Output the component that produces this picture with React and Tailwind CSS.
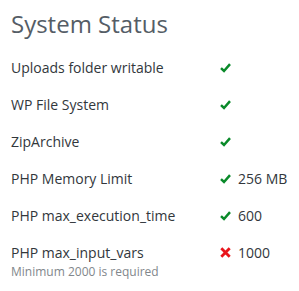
import React from "react";

function Check() {
  return (
    <svg width="11" height="10" viewBox="0 0 11 10" className="block mt-[1px]">
      <path d="M1 5.2 L4 8 L10 1.2" fill="none" stroke="#0a8a2a" strokeWidth="2.5" strokeLinecap="butt" strokeLinejoin="miter" />
    </svg>
  );
}

function Cross() {
  return (
    <svg width="11" height="11" viewBox="0 0 11 11" className="block">
      <path d="M1.3 1.3 L9.7 9.7 M9.7 1.3 L1.3 9.7" fill="none" stroke="#e8141b" strokeWidth="2.8" />
    </svg>
  );
}

const rows = [
  { label: "Uploads folder writable", ok: true },
  { label: "WP File System", ok: true },
  { label: "ZipArchive", ok: true },
  { label: "PHP Memory Limit", ok: true, value: "256 MB" },
  { label: "PHP max_execution_time", ok: true, value: "600" },
  { label: "PHP max_input_vars", ok: false, value: "1000", note: "Minimum 2000 is required" },
];

export default function App() {
  return (
    <div
      className="w-[299px] h-[291px] bg-white pl-[11px] pt-[8px]"
      style={{ fontFamily: '"Open Sans", sans-serif' }}
    >
      <h1 className="text-[24px] leading-[32px] text-[#555d66] font-normal">System Status</h1>
      <div className="mt-[14px]">
        {rows.map((r) => (
          <div key={r.label} className="h-[37.2px]">
            <div className="flex items-center h-[26px] text-[14px] text-[#32373c]">
              <div className="w-[209px]">{r.label}</div>
              <div className="w-[18px] flex items-center">{r.ok ? <Check /> : <Cross />}</div>
              {r.value && <div>{r.value}</div>}
            </div>
            {r.note && <div className="text-[12px] leading-[16px] text-[#82878c] -mt-[2px]">{r.note}</div>}
          </div>
        ))}
      </div>
    </div>
  );
}
